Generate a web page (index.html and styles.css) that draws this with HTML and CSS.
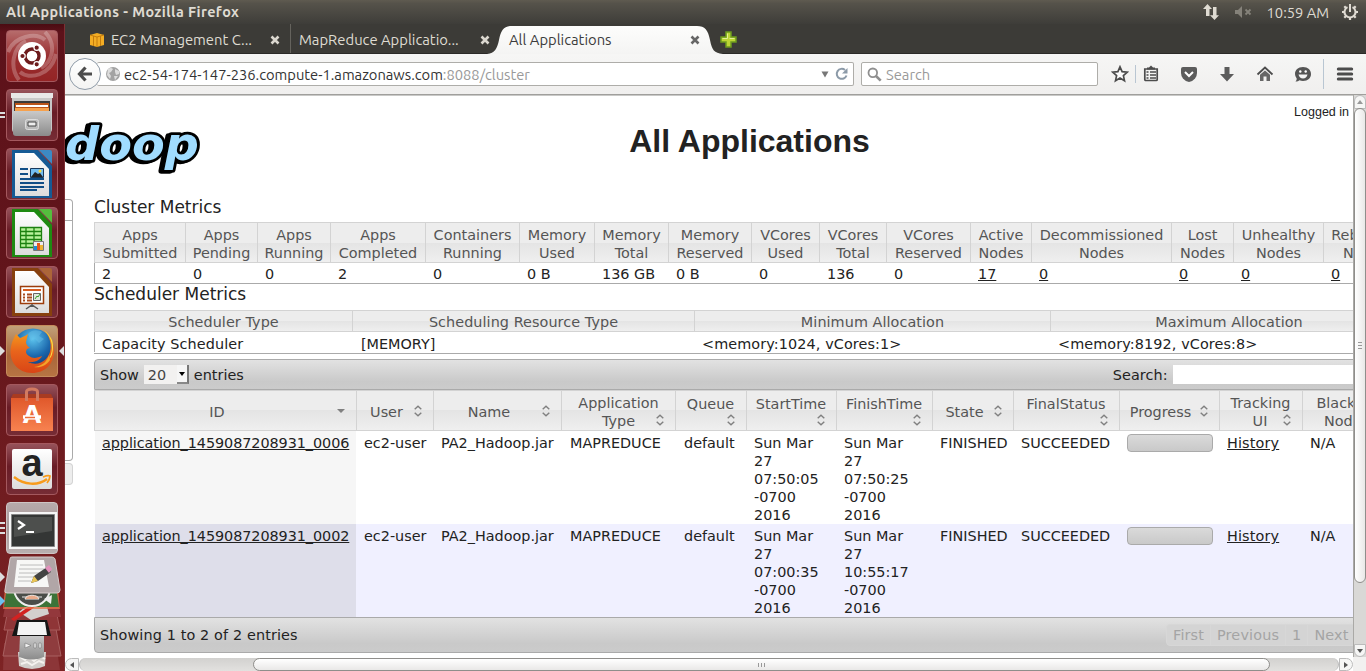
FILE: index.html
```html
<!DOCTYPE html>
<html lang="en">
<head>
<meta charset="utf-8">
<title>All Applications</title>
<link rel="stylesheet" href="styles.css">
</head>
<body>
<svg width="0" height="0" class="defs">
  <defs>
    <linearGradient id="paper" x1="0" y1="0" x2="0" y2="1"><stop offset="0" stop-color="#fff"/><stop offset="1" stop-color="#dcdcdc"/></linearGradient>
    <linearGradient id="steel" x1="0" y1="0" x2="0" y2="1"><stop offset="0" stop-color="#c9c9c9"/><stop offset="1" stop-color="#8b8b8b"/></linearGradient>
    <linearGradient id="fox" x1="0" y1="0" x2="0" y2="1"><stop offset="0" stop-color="#f7a01c"/><stop offset=".5" stop-color="#e8641c"/><stop offset="1" stop-color="#d94516"/></linearGradient>
    <radialGradient id="globe" cx=".5" cy=".25" r=".7"><stop offset="0" stop-color="#5cc4ee"/><stop offset=".6" stop-color="#1c68ad"/><stop offset="1" stop-color="#123d7c"/></radialGradient>
    <linearGradient id="bag" x1="0" y1="0" x2="0" y2="1"><stop offset="0" stop-color="#e0582b"/><stop offset="1" stop-color="#f78250"/></linearGradient>
    <linearGradient id="tabfill" x1="0" y1="0" x2="0" y2="1"><stop offset="0" stop-color="#fdfdfc"/><stop offset="1" stop-color="#f4f4f3"/></linearGradient>
    <symbol id="sort" viewBox="0 0 10 12"><path d="M1.700 4.300 5 1.200 8.300 4.300M1.700 7.700 5 10.800 8.300 7.700" fill="none" stroke="#808080" stroke-width="1.400"/></symbol>
  </defs>
</svg>

<header class="panel">
  <span class="panel-title">All Applications - Mozilla Firefox</span>
  <span class="indicators">
    <svg width="18" height="18" viewBox="0 0 18 18"><path d="M5.500 1 1 6h3v7h3.500V6H10zM12.500 17 8 12.200h3V4h3.500v8.200H17z" fill="#dfdbd2"/></svg>
    <svg width="18" height="14" viewBox="0 0 18 14" class="ind-sound"><path d="M0 5h3l4-4v12L3 9H0z" fill="#85827a"/><path d="m10.500 4.500 5 5m0-5-5 5" stroke="#85827a" stroke-width="1.800"/></svg>
    <span class="clock">10:59 AM</span>
    <svg width="18" height="18" viewBox="0 0 18 18"><g fill="none" stroke="#dfdbd2"><path d="M6.500 4.100a5.500 5.500 0 1 0 5 0" stroke-width="2"/><path d="M9 1v8" stroke-width="2"/><path d="M1 9h2.500m11 0H17M9 14.500V17M3.300 3.300 5 5m8 8 1.700 1.700M14.700 3.300 13 5m-8 8-1.700 1.700" stroke-width="2.200"/></g></svg>
  </span>
</header>

<div class="desktop">
<nav class="launcher">
  <div class="tile t-dash"><svg viewBox="0 0 52 52"><path d="M2 22C8 6 30 2 39 10M13 50C3 37 7 17 20 11M50 24c-5 22-27 26-36 18M39 2c13 14 6 31-4 36" fill="none" stroke="#fff" stroke-opacity=".24" stroke-width="4"/><circle cx="26" cy="26" r="14" fill="#fff"/><circle cx="26" cy="26" r="7" fill="none" stroke="#6d1b1c" stroke-width="3.400"/><g fill="#6d1b1c" stroke="#fff" stroke-width="1.200"><circle cx="16.500" cy="26" r="2.700"/><circle cx="30.700" cy="17.700" r="2.700"/><circle cx="30.700" cy="34.300" r="2.700"/></g></svg></div>
  <div class="tile"><i class="pip two"></i><svg viewBox="0 0 52 52"><path d="M6 4h40v36a4 4 0 0 1-4 4H10a4 4 0 0 1-4-4z" fill="#c8c8c8"/><path d="M5 4h42v5H5z" fill="#e8e8e8"/><path d="M8 12h36v12H8z" fill="#3a3a3a"/><path d="M9 14h34v9H9z" fill="#ba5419"/><path d="M10 16h32v2H10z" fill="#fff"/><path d="M9 19h34v4H9z" fill="#f6a14d"/><path d="M7 22h38v22a3 3 0 0 1-3 3H10a3 3 0 0 1-3-3z" fill="url(#steel)"/><rect x="19.500" y="30.500" width="13" height="10" rx="2" fill="#bbb" stroke="#ddd"/><path d="M22 33h8v4h-8z" fill="#eee" stroke="#444"/></svg></div>
  <div class="tile"><svg viewBox="0 0 52 52"><path d="M6 2h26l14 16v32H6z" fill="#155a94"/><path d="M33 2h11q2 0 2 2v12z" fill="#3c8ac4"/><path d="M9 5h19l15 16v27H9z" fill="url(#paper)"/><path d="M14 21h8m-8 5h8m-8 5h24m-24 4h24m-24 4h24m-24 3h17" stroke="#104e86" stroke-width="2"/><path d="M24.500 20.500h13v9h-13z" fill="#73bdf0" stroke="#17385c"/><path d="m25 29 4-5 3 2 2-1 3 4z" fill="#222"/><circle cx="34" cy="23" r="1.500" fill="#f8d93b"/></svg></div>
  <div class="tile"><svg viewBox="0 0 52 52"><path d="M6 2h26l14 16v32H6z" fill="#1f8a12"/><path d="M33 2h11q2 0 2 2v12z" fill="#55bd3d"/><path d="M9 5h19l15 16v27H9z" fill="url(#paper)"/><path d="M14 21h22v20H14z" fill="#b8f29b"/><path d="M14.500 20.500h21v20h-21zM14 24.500h22m-22 4h22m-22 4h22m-22 4h22M20 20v21m8-21v21" fill="none" stroke="#1c8110" stroke-width="1.300"/><path d="M27.500 34.500h10v9h-10z" fill="#eee" stroke="#777"/><path d="M28 39h3v4h-3z" fill="#1f8fd5"/><path d="M31 36h3v7h-3z" fill="#e6581a"/><path d="M34 38h3v5h-3z" fill="#edb434"/></svg></div>
  <div class="tile"><svg viewBox="0 0 52 52"><path d="M6 2h26l14 16v32H6z" fill="#87400e"/><path d="M33 2h11q2 0 2 2v12z" fill="#ac6539"/><path d="M9 5h19l15 16v26H9z" fill="url(#paper)"/><path d="M14.500 20.500h23v17h-23z" fill="#fff" stroke="#9c3c0b" stroke-width="1.500"/><path d="M17 24h18" stroke="#d75d20" stroke-width="2"/><path d="M17 28.500h2m-2 3h2m-2 3h2m2-6h5m-5 3h5m-5 3h5" stroke="#a84b1e" stroke-width="1.800"/><path d="M27.500 27.500h7v7h-7z" fill="#dfe8dd" stroke="#666"/><path d="m29 33 2-3 1 1 2-3" fill="none" stroke="#3a9e2b"/><path d="M26 38v3m-6 2 6-4 6 4" fill="none" stroke="#555" stroke-width="1.500"/></svg></div>
  <div class="tile t-fox"><i class="pip tri"></i><i class="pip tri-r"></i><svg viewBox="0 0 52 52"><circle cx="27" cy="24" r="20.500" fill="url(#globe)"/><path d="M22 9c4-5 11-4 14-2l-3 4 5 3-5 4-4-4-4 2z" fill="#6bc2e8" opacity=".45"/><path d="M38 5c8 8 9 22 2 29-5 5-12 6-18 3 8 1 13-3 14-6-5 2-9 3-13 0-5-3-3-8 1-8-3-2-4-4-4-6l2-8c-4 3-6 3-8 4l-4-4c-2 4-4 7-5 13-3 14 7 26 21 26 13 0 22-9 22-22 0-8-3-15-10-21z" fill="url(#fox)"/><path d="M38 5c9 8 10 20 5 29 4-2 5-14 3-19-2-4-4-7-8-10z" fill="#f9dd45"/><path d="M44 35c-4 6-10 8-16 7 9-1 13-6 15-12z" fill="#f3a32a"/></svg></div>
  <div class="tile"><svg viewBox="0 0 52 52"><path d="M7 10h38l2 4H5z" fill="#a83b21"/><path d="M5 14h42v33H5z" fill="url(#bag)"/><path d="M20.500 17V8q0-3 5.500-3t5.500 3v9" fill="none" stroke="#d27a60" stroke-width="3"/><text x="26" y="39" text-anchor="middle" class="bag-letter">A</text><path d="M17 33h18" stroke="#fff" stroke-width="3.500"/><path d="M19 33.500h10" stroke="#ed6d39" stroke-width="1.500"/></svg></div>
  <div class="tile"><svg viewBox="0 0 52 52"><rect x="6" y="6" width="40" height="40" rx="2" fill="url(#paper)"/><text x="26" y="33" text-anchor="middle" class="amazon-letter">a</text><path d="M8 34c10 8 24 9 33 2" fill="none" stroke="#f79b1d" stroke-width="2.400"/><path d="M37 34q5-2 7-1 0 3-3 7" fill="none" stroke="#f79b1d" stroke-width="1.800"/></svg></div>
  <div class="tile t-term"><i class="pip three"></i><svg viewBox="0 0 52 52"><path d="M3 10h48v37H3z" fill="#f6f6f6"/><path d="M5.500 12.500h43v32h-43z" fill="#343635" stroke="#858585"/><path d="M8 15h38v14L8 35z" fill="#656765" opacity=".5"/><path d="m12 19 6 4-6 4M20 30h8" fill="none" stroke="#fff" stroke-width="2.200"/></svg></div>
  <svg class="stack" viewBox="0 0 64 114">
    <path d="M4 87h52l4 27H3z" fill="#8c3638"/>
    <path d="M8 73h48l5 27H3z" fill="#8f3c3e" stroke="#a86060"/>
    <path d="M18 96h28l-1 14q-13 6-26 0z" fill="#d2cfcc"/><path d="m20 101 5 3 3-4 6 5 6-5 5 3m-24 5 6-2 5 3 7-4 5 2" fill="none" stroke="#f4f2ef" stroke-width="2"/>
    <path d="M20 80h24v21q-12 5-25 0z" fill="url(#steel)"/><path d="M25 87v5l6-2.500zm9 0h2v5h-2zm5 0h2v5h-2z" fill="#f2f2f2" stroke="#777" stroke-width=".6"/>
    <path d="M8 54h48l4 20H4z" fill="#8f3537" stroke="#a85a5b"/><path d="M17 64h30l4 16H12z" fill="#161616"/><path d="M19 66h26l2 13H17z" fill="#f4f4f4"/>
    <path d="M6 46h52l3 15H3z" fill="#93383c"/><path d="m32 45 14 2 3 11-18 6-12-8z" fill="#d3d0ce"/><path d="m11 63 20-14 7-1-6 5-18 12z" fill="#d32221"/>
    <path d="M5 32h53l2 21H3z" fill="#e5774a" opacity=".75"/><path d="M7 31h49l3 20H4z" fill="#3c7338"/><circle cx="32" cy="32" r="18" fill="#4a4d49" stroke="#eee" stroke-width="2"/><path d="M25 43c1-5 13-5 14 0zm-3-2h20" fill="#e76a2a" stroke="#ececec"/><path d="m44 43 8-4-1 9z" fill="#eee"/>
    <path d="M12 1h40q2 0 3 2l5 31q0 3-3 3H7q-3 0-2-3l5-31q0-2 2-2z" fill="#b1a6a7" stroke="#d6cccc"/><path d="M17 4h27l5 27H14z" fill="#f7f7f6"/><path d="M20 9h23m-24 4h25m-25 4h25m-26 4h18m-18 4h13" stroke="#bcbcbc"/><path d="m31 27 3-7 13-9 4 5-13 9z" fill="#444"/><path d="m31 27 3-7 4 5z" fill="#eac554"/><path d="m45 12 4-3 3 4-3 4z" fill="#e291bc"/>
  </svg>
  <i class="pip tri low"></i><i class="pip tri low blue"></i>
</nav>

<main class="browser">
  <div class="tabs">
    <div class="tab first">
      <svg width="16" height="16" viewBox="0 0 16 16"><path d="m1 3 7-2 7 2v10l-7 2-7-2z" fill="#f4ad24"/><path d="m1 3 7 2 7-2M8 5v10M4.500 4v10m7-10v10" fill="none" stroke="#c57c0c"/></svg>
      <span class="tab-label">EC2 Management C...</span>
      <svg class="close" viewBox="0 0 10 10"><path d="m1.500 1.500 7 7m0-7-7 7"/></svg>
    </div>
    <div class="tab second">
      <span class="tab-label">MapReduce Applicatio...</span>
      <svg class="close" viewBox="0 0 10 10"><path d="m1.500 1.500 7 7m0-7-7 7"/></svg>
    </div>
    <div class="tab active">
      <svg class="tab-shape" width="236" height="30" viewBox="0 0 236 30"><path d="M0 30C8 29 10 25 12 16 14 6 17 2 25 2h185c8 0 11 4 13 14s4 13 13 14z" fill="url(#tabfill)"/></svg>
      <span class="tab-label">All Applications</span>
      <svg class="close dark" viewBox="0 0 10 10"><path d="m1.500 1.500 7 7m0-7-7 7"/></svg>
    </div>
    <svg class="plus" width="17" height="17" viewBox="0 0 17 17"><path d="M6 1h5v5h5v5h-5v5H6v-5H1V6h5z" fill="#bcd534" stroke="#6c9a1e" stroke-width="1.500"/><path d="M7.500 2.500v5h-5m12 0h-5" fill="none" stroke="#e3ef95"/></svg>
  </div>

  <div class="navbar">
    <span class="back"><svg width="18" height="18" viewBox="0 0 18 18"><path d="M9.500 2.500 3.500 9l6 6.500M4 9h12" fill="none" stroke="#4c4c4c" stroke-width="3.200"/></svg></span>
    <div class="url">
      <svg width="16" height="16" viewBox="0 0 16 16"><circle cx="8" cy="8" r="7" fill="#a3a3a3"/><path d="M3 3q3-2 5 0L6 6 4 7l2 3-1 3-3-4zm7 0 4 2v3l-3 1-1-3zm-1 7 4 0-3 4z" fill="#ddd"/></svg>
      <span class="host">ec2-54-174-147-236.compute-1.amazonaws.com<span class="path">:8088/cluster</span></span>
      <svg class="drop" width="8" height="7" viewBox="0 0 8 7"><path d="M.5.500h7L4 6.500z" fill="#777"/></svg>
      <svg width="14" height="14" viewBox="0 0 14 14"><path d="M11.500 8.500A5 5 0 1 1 10 3" fill="none" stroke="#8c9aa8" stroke-width="2"/><path d="M12.500 1v5.500H7z" fill="#8c9aa8"/></svg>
    </div>
    <div class="search">
      <svg width="15" height="15" viewBox="0 0 15 15"><circle cx="5.800" cy="5.800" r="4.300" fill="none" stroke="#8f8f8f" stroke-width="1.800"/><path d="m9 9 4.700 4.700" stroke="#8f8f8f" stroke-width="2.600"/></svg>
      <span>Search</span>
    </div>
    <div class="tools">
      <svg width="18" height="18" viewBox="0 0 18 18"><path d="m9 1.800 2.100 4.800 5.200.500-3.900 3.500 1.100 5.200L9 13.100l-4.500 2.700 1.100-5.200-3.900-3.500 5.200-.500z" fill="#fbfbfb" stroke="#4c4c4c" stroke-width="1.700"/></svg>
      <i class="sep"></i>
      <svg width="18" height="18" viewBox="0 0 18 18"><path d="M2.800 4h12.400v10.500q0 1-1 1H3.800q-1 0-1-1z" fill="#f3f3f2" stroke="#4c4c4c" stroke-width="1.700"/><path d="M5 4.500h8V2.500h-2L9 .500l-2 2H5z" fill="#4c4c4c"/><path d="M4.500 7h2m1.500 0h6m-9.500 3h2m1.500 0h6m-9.500 3h2m1.500 0h6" stroke="#4c4c4c" stroke-width="1.400"/></svg>
      <svg width="18" height="18" viewBox="0 0 18 18"><path d="M1 4q0-2 2-2h12q2 0 2 2v4q0 3-2 5.500Q12 17 9 17t-6-3.500Q1 11 1 8z" fill="#5c5c5c"/><path d="m5 7 4 4 4-4" fill="none" stroke="#fff" stroke-width="2"/></svg>
      <svg width="18" height="18" viewBox="0 0 18 18"><path d="M6.500 2h5v7H16l-7 7.500L2 9h4.500z" fill="#5c5c5c"/></svg>
      <svg width="18" height="18" viewBox="0 0 18 18"><path d="m1.500 9.500 7.500-7 7.500 7" fill="none" stroke="#4c4c4c" stroke-width="1.800"/><path d="M4 9.800 9 5.500l5 4.300V16h-3.500v-4.500h-3V16H4z" fill="#666"/></svg>
      <svg width="18" height="18" viewBox="0 0 18 18"><path d="M9 2c5 0 8 3 8 7s-3 7-8 7q-2 0-3.500-.700Q3.500 17 1.500 16.500 3 15 2.700 13.500 1 11.500 1 9c0-4 3-7 8-7z" fill="#555"/><path d="M4.500 9.500h9Q12.500 13.500 9 13.500t-4.500-4z" fill="#f4f4f4"/><circle cx="6.300" cy="6.500" r="1.200" fill="#fff"/><circle cx="11.700" cy="6.500" r="1.200" fill="#fff"/></svg>
      <i class="sep tall"></i>
      <svg width="18" height="18" viewBox="0 0 18 18"><path d="M2.300 4h13.400M2.300 9h13.400M2.300 14h13.400" stroke="#4c4c4c" stroke-width="3" stroke-linecap="round"/></svg>
    </div>
  </div>

  <div class="view">
  <div class="page">
    <div class="page-head">
      <svg class="logo" width="145" height="70" viewBox="0 0 145 70">
        <text x="0" y="48" textLength="134" lengthAdjust="spacingAndGlyphs" class="logo-word">doop</text>
      </svg>
      <h1>All Applications</h1>
      <span class="login">Logged in</span>
    </div>
    <div class="body">
      <aside class="side"><div class="side-box"><div class="side-line"></div></div><div class="side-tools"></div></aside>
      <section class="content">
        <h2>Cluster Metrics</h2>
        <div class="grid cluster">
          <b>Apps<br>Submitted</b><b>Apps<br>Pending</b><b>Apps<br>Running</b><b>Apps<br>Completed</b><b>Containers<br>Running</b><b>Memory<br>Used</b><b>Memory<br>Total</b><b>Memory<br>Reserved</b><b>VCores<br>Used</b><b>VCores<br>Total</b><b>VCores<br>Reserved</b><b>Active<br>Nodes</b><b>Decommissioned<br>Nodes</b><b>Lost<br>Nodes</b><b>Unhealthy<br>Nodes</b><b>Rebooted<br>Nodes</b>
          <span>2</span><span>0</span><span>0</span><span>2</span><span>0</span><span>0 B</span><span>136 GB</span><span>0 B</span><span>0</span><span>136</span><span>0</span><span><u>17</u></span><span><u>0</u></span><span><u>0</u></span><span><u>0</u></span><span><u>0</u></span>
        </div>
        <h2 class="tight">Scheduler Metrics</h2>
        <div class="grid scheduler">
          <b>Scheduler Type</b><b>Scheduling Resource Type</b><b>Minimum Allocation</b><b>Maximum Allocation</b>
          <span>Capacity Scheduler</span><span>[MEMORY]</span><span>&lt;memory:1024, vCores:1&gt;</span><span>&lt;memory:8192, vCores:8&gt;</span>
        </div>
        <div class="bar top">
          <span>Show</span><span class="select">20<i><svg width="6" height="4" viewBox="0 0 6 4"><path d="M0 0h6L3 4z"/></svg></i></span><span>entries</span>
          <span class="filter">Search:<i class="filter-box"></i></span>
        </div>
        <div class="apps">
          <b class="one">ID<svg class="sorted" viewBox="0 0 10 12"><path d="M1 4h8L5 8z" fill="#808080"/></svg></b>
          <b class="one">User<svg><use href="#sort"/></svg></b>
          <b class="one">Name<svg><use href="#sort"/></svg></b>
          <b class="two">Application<br>Type<svg><use href="#sort"/></svg></b>
          <b class="wrap">Queue<svg><use href="#sort"/></svg></b>
          <b class="wrap">StartTime<svg><use href="#sort"/></svg></b>
          <b class="wrap">FinishTime<svg><use href="#sort"/></svg></b>
          <b class="one">State<svg><use href="#sort"/></svg></b>
          <b class="wrap">FinalStatus<svg><use href="#sort"/></svg></b>
          <b class="one tightr">Progress<svg><use href="#sort"/></svg></b>
          <b class="two ui">Tracking<br><em>UI</em><svg><use href="#sort"/></svg></b>
          <b class="two black">Blacklisted<br><em>Nodes</em></b>

          <span class="id"><u>application_1459087208931_0006</u></span><span>ec2-user</span><span>PA2_Hadoop.jar</span><span class="nudge">MAPREDUCE</span><span class="nudge">default</span><span>Sun Mar<br>27<br>07:50:05<br>-0700<br>2016</span><span>Sun Mar<br>27<br>07:50:25<br>-0700<br>2016</span><span>FINISHED</span><span>SUCCEEDED</span><span><i class="progress"></i></span><span><u class="loose">History</u></span><span>N/A</span>

          <span class="id even"><u>application_1459087208931_0002</u></span><span class="even">ec2-user</span><span class="even">PA2_Hadoop.jar</span><span class="even nudge">MAPREDUCE</span><span class="even nudge">default</span><span class="even">Sun Mar<br>27<br>07:00:35<br>-0700<br>2016</span><span class="even">Sun Mar<br>27<br>10:55:17<br>-0700<br>2016</span><span class="even">FINISHED</span><span class="even">SUCCEEDED</span><span class="even"><i class="progress"></i></span><span class="even"><u class="loose">History</u></span><span class="even">N/A</span>
        </div>
        <div class="bar bottom">
          <span>Showing 1 to 2 of 2 entries</span>
          <span class="pager"><i>First</i><i>Previous</i><i>1</i><i>Next</i></span>
        </div>
      </section>
    </div>
  </div>
  <div class="vscroll">
    <div class="cap up"><svg width="6" height="4" viewBox="0 0 6 4"><path d="M0 4h6L3 0z" fill="#999"/></svg></div>
    <div class="thumb"><i></i><i></i><i></i></div>
    <div class="cap down"><svg width="6" height="4" viewBox="0 0 6 4"><path d="M0 0h6L3 4z" fill="#555"/></svg></div>
  </div>
  <div class="hscroll">
    <div class="cap left"><svg width="4" height="6" viewBox="0 0 4 6"><path d="M4 0v6L0 3z" fill="#555"/></svg></div>
    <div class="track"><div class="thumb"><i></i><i></i><i></i></div></div>
    <div class="cap right"><svg width="4" height="6" viewBox="0 0 4 6"><path d="M0 0v6l4-3z" fill="#555"/></svg></div>
  </div>
  <div class="corner"></div>
  </div>
</main>
</div>
</body>
</html>
```
FILE: styles.css
```css
* { box-sizing: border-box; }
body {
  margin: 0;
  width: 1366px;
  height: 671px;
  overflow: hidden;
  display: flex;
  flex-direction: column;
  font-family: Ubuntu, "Noto Sans", sans-serif;
  background: #fff;
}
i, em { font-style: normal; }
svg { flex: none; display: block; }
.defs { position: absolute; }

/* top panel */
.panel {
  height: 24px;
  flex: none;
  display: flex;
  justify-content: space-between;
  align-items: center;
  padding: 0 7px 0 6px;
  background: linear-gradient(#5f5b50, #55524a 15%, #3e3d39);
  color: #dfdbd2;
  font-size: 14.7px;
}
.panel-title { font-weight: bold; font-size: 14.4px; letter-spacing: .42px; }
.indicators { display: flex; align-items: center; }
.ind-sound { margin: 0 14px 0 15px; }
.clock { margin-right: 12px; }

.desktop { flex: 1; display: flex; min-height: 0; }

/* launcher */
.launcher {
  position: relative;
  width: 65px;
  flex: none;
  display: flex;
  flex-direction: column;
  gap: 7px;
  padding: 6px 0 0 6px;
  background: linear-gradient(#4a0c12, #5d121a 8px, #62151b 40%, #7d2324);
  border-right: 1px solid #7d3034;
}
.tile {
  position: relative;
  width: 52px;
  height: 52px;
  flex: none;
  border: 1px solid #a4585e;
  border-radius: 4px;
  background: linear-gradient(#96525a, #691c26 45%, #762c35);
}
.tile > svg { width: 52px; height: 52px; margin: -1px; }
.t-dash { background: linear-gradient(#b66c6c, #9a2f31 50%, #942425); overflow: hidden; }
.t-fox { background: linear-gradient(#c1a079, #a9663b 60%, #b77443); border-color: #c58b5c; }
.t-term { background: linear-gradient(#b7aaab, #a79a9a 50%, #b9b0b0); border-color: #cec4c4; }
.bag-letter { font: bold 24px "DejaVu Sans", sans-serif; fill: #fff; }
.amazon-letter { font: bold 38px "Liberation Sans", sans-serif; fill: #222; }
.pip { position: absolute; left: -7px; width: 5px; }
.pip.two { top: 22px; height: 6px; border: solid #ddd; border-width: 2px 0; }
.pip.three { top: 19px; height: 12px; background: repeating-linear-gradient(#ddd 0 2px, transparent 2px 5px); }
.pip.tri { top: 20px; border: solid transparent; border-width: 5px 0 5px 5px; border-left-color: #ddd; width: 0; }
.pip.tri-r { top: 20px; left: 52px; width: 0; border: solid transparent; border-width: 5px 0 5px 5px; border-width: 5px 5px 5px 0; border-right-color: #ddd; }
.pip.low { left: 0; top: 548px; }
.pip.blue { top: 572px; border-left-color: #6cc1ee; }
.stack { width: 64px; height: 114px; margin: -5px 0 0 -6px; }

/* browser chrome */
.browser { flex: 1; min-width: 0; display: flex; flex-direction: column; }
.tabs {
  height: 30px;
  flex: none;
  display: flex;
  align-items: center;
  background: #3c3b37;
  border-bottom: 1px solid #2b2a28;
  color: #dfdbd2;
  font-size: 14.8px;
}
.tab { display: flex; align-items: center; height: 29px; padding-top: 3px; }
.tab-label { white-space: nowrap; margin-top: -1px; }
.close { width: 10px; height: 10px; margin-left: auto; stroke: #dcd8d0; stroke-width: 2.6; fill: none; }
.close.dark { stroke: #666; }
.tab.first { width: 225px; padding-left: 24px; padding-right: 10px; gap: 6px; }
.tab.second { width: 210px; padding-left: 8px; padding-right: 10px; border-left: 1px solid #65635d; }
.tab.active { position: relative; width: 205px; height: 30px; padding-left: 9px; padding-right: 5px; color: #3c3c3c; }
.tab.active .tab-label { position: relative; }
.tab.active .close { position: relative; }
.tab-shape { position: absolute; left: -13px; top: 0; }
.plus { margin: 2px 0 0 15px; }
.navbar {
  height: 41px;
  flex: none;
  display: flex;
  align-items: center;
  padding-left: 4px;
  background: linear-gradient(#f6f6f5, #f0efee);
  border-bottom: 1px solid #a09f9c;
}
.back {
  position: relative;
  width: 32px;
  height: 32px;
  border: 1px solid #8f9ba8;
  border-radius: 50%;
  background: linear-gradient(#fff, #f4f4f3);
  display: flex;
  align-items: center;
  justify-content: center;
}
.url, .search {
  display: flex;
  align-items: center;
  height: 24px;
  background: #fff;
  border: 1px solid #aeada9;
  border-radius: 2px;
  font-size: 14.72px;
  color: #333;
}
.url { width: 757px; margin-left: -4px; padding: 0 4px 0 8px; border-left: 0; gap: 3px; }
.path { color: #999; }
.drop { margin-left: auto; margin-right: 3px; }
.search { width: 237px; margin-left: 7px; padding-left: 5px; gap: 4px; color: #9a9a9a; }
.tools { display: flex; align-items: center; margin-left: 13px; gap: 20px; }
.sep { width: 1px; height: 18px; background: #b9c6d2; margin: 0 -14px 0 -14px; }
.sep.tall { height: 30px; margin: 0 -8px 0 -9px; }

/* viewport with scroll bars */
.view {
  flex: 1;
  min-height: 0;
  display: grid;
  grid-template-columns: 1288px 13px;
  grid-template-rows: 562px 14px;
}
.page {
  overflow: hidden;
  border-top: 1px solid #c9c9c7;
  background: #fff;
  font: 14.4px/18px "DejaVu Sans", sans-serif;
  color: #222;
}
.page-head { display: grid; grid-template-columns: 400px 569px 1fr; height: 103px; }
.logo { margin-top: 16px; }
.logo-word {
  font: bold italic 46px "DejaVu Sans", sans-serif;
  fill: #a0dcff;
  stroke: #000;
  stroke-width: 5.5px;
  stroke-linejoin: round;
  paint-order: stroke;
  filter: drop-shadow(-3px 1px 0 #000);
}
h1 { margin: 26px 0 0; font: bold 32px/38px "Liberation Sans", sans-serif; text-align: center; }
.login { justify-self: end; padding: 8px 4px 0 0; font: 12.5px/16px "Liberation Sans", sans-serif; }
.body { display: flex; gap: 21px; }
.side { width: 8px; flex: none; }
.side-box { height: 262px; border: solid #aaa; border-width: 1px 1px 1px 0; border-radius: 0 4px 4px 0; }
.side-line { height: 21px; border-bottom: 1px solid #aaa; }
.side-tools { height: 22px; margin-top: 2px; border: 1px solid #d3d3d3; border-left: 0; border-radius: 0 4px 4px 0; background: #ededed; }
.content { width: 1320px; flex: none; }
h2 { margin: 0; height: 23px; font: 17px/17px "DejaVu Sans", sans-serif; }
h2.tight { height: 26px; line-height: 20px; }

/* metric tables */
.grid { display: grid; border: 1px solid #aaa; border-top-color: #d3d3d3; border-left: 0; }
.grid b, .apps b {
  font-weight: normal;
  color: #555;
  text-align: center;
  border-left: 1px solid #d3d3d3;
  border-bottom: 1px solid #d3d3d3;
  background: linear-gradient(#ededed 50%, #e4e4e4 50%, #efefef);
}
.grid span { padding-left: 8px; line-height: 22px; height: 20px; white-space: nowrap; }
.cluster { grid-template-columns: 91px 72px 73px 95px 94px 75px 74px 83px 68px 67px 84px 61px 140px 62px 90px 84px; grid-template-rows: 40px 20px; width: 1314px; }
.cluster b { padding-top: 3px; }
.scheduler { grid-template-columns: 258px 342px 356px 1fr; grid-template-rows: 21px 21px; }
.scheduler b { padding-top: 2px; line-height: 18px; letter-spacing: .06px; }
.scheduler b:nth-child(4) { padding-right: 6px; }
.scheduler span { line-height: 24px; letter-spacing: .1px; }
.cluster span:nth-child(17), .scheduler span:nth-child(5) { border-left: 1px solid #aaa; padding-left: 7px; }
.scheduler span:nth-child(6) { padding-left: 9px; letter-spacing: 0; }

.bar {
  display: flex;
  align-items: center;
  padding: 0 5px;
  border: 1px solid #aaa;
  background: linear-gradient(#e2e2e2, #c9c9c9 75%, #cbcbcb);
}
.bar.top { height: 31px; margin-top: 5px; border-radius: 4px 4px 0 0; gap: 5px; }
.bar.bottom { height: 36px; border-radius: 0 0 4px 4px; letter-spacing: .13px; }
.bar.bottom > span:first-child { width: 198px; white-space: nowrap; }
.select {
  display: flex;
  justify-content: space-between;
  width: 45px;
  height: 19px;
  line-height: 20px;
  padding-left: 4px;
  background: #f2f1f0;
  color: #444;
}
.select i {
  width: 12px;
  height: 19px;
  display: flex;
  align-items: center;
  justify-content: center;
  background: #f6f6f6;
  border-right: 2px solid #777;
  border-bottom: 2px solid #888;
}
.filter { display: flex; align-items: center; gap: 5px; margin-left: 864px; letter-spacing: .08px; }
.filter-box { width: 190px; height: 19px; background: #fff; }

/* application table */
.apps {
  display: grid;
  grid-template-columns: 262px 77px 128px 114px 71px 90px 96px 81px 106px 100px 83px 112px;
  grid-template-rows: 41px 93px 93px;
}
.apps b { position: relative; border-top: 1px solid #d3d3d3; }
.apps b svg { position: absolute; right: 10px; top: 14px; width: 10px; height: 12px; }
.apps b.one { line-height: 42px; padding-right: 17px; }
.apps b.tightr { padding-right: 18px; }
.apps b.two { padding-top: 3px; }
.apps b.ui em { margin-right: 16px; margin-left: 0; }
.apps b.ui { padding-right: 1px; }
.apps b.ui em { margin-right: 1px; }
.apps b.black { padding-right: 6px; }
.apps b.black em { margin-right: 18px; }
.apps b.two svg, .apps b.wrap svg { top: 23px; }
.apps b.wrap { padding-top: 4px; padding-right: 1px; }
.apps span { padding: 3px 0 0 8px; white-space: nowrap; overflow: hidden; }
.apps .nudge { padding-left: 9px; }
.apps .even { background: #f0f0ff; }
.apps .id { background: #f6f6f6; margin-left: 1px; padding-left: 7px; letter-spacing: -.07px; }
.apps .id.even { background: #dedeea; }
u { text-underline-offset: 1px; }
.loose { letter-spacing: .15px; }
.progress {
  display: block;
  width: 86px;
  height: 18px;
  border: 1px solid #aaa;
  border-radius: 4px;
  background: linear-gradient(#dadada, #c9c9c9);
}
.pager { display: flex; margin-left: 868px; color: #a4a4a4; letter-spacing: .15px; }
.pager i { padding: 1px 6px; height: 22px; border: 1px solid #d7d7d7; background: #d4d4d4; margin-right: -1px; }
.pager i:first-child { border-radius: 4px 0 0 4px; }

/* scroll bars */
.vscroll {
  display: flex;
  flex-direction: column;
  background: #d9d8d6;
  border-left: 1px solid #aaa9a6;
}
.cap { display: flex; align-items: center; justify-content: center; background: #f6f6f5; border: 1px solid #bbb; flex: none; }
.up { height: 14px; border-radius: 6px 6px 0 0; }
.down { height: 13px; border-radius: 0 0 6px 6px; }
.thumb { display: flex; align-items: center; justify-content: center; gap: 2px; border: 1px solid #8f8e8b; border-radius: 7px; }
.vscroll .thumb { flex-direction: column; height: 477px; margin: -1px 0 61px; background: linear-gradient(90deg, #fff, #e9e8e7); }
.vscroll .thumb i { width: 4px; height: 1px; background: #999; }
.hscroll { display: flex; padding: 1px 0 0; background: #fff; }
.hscroll .thumb { width: 1017px; margin-left: 173px; height: 13px; background: linear-gradient(#fff, #e9e8e7); }
.hscroll .thumb i { width: 1px; height: 4px; background: #999; }
.left { width: 14px; border-radius: 7px 0 0 7px; }
.right { width: 14px; border-radius: 0 7px 7px 0; }
.track { flex: 1; background: linear-gradient(#d2d1cf, #e2e1df); border: solid #bbb; border-width: 0 1px; border-radius: 7px; }
.corner { background: #f2f1f0; }
```
